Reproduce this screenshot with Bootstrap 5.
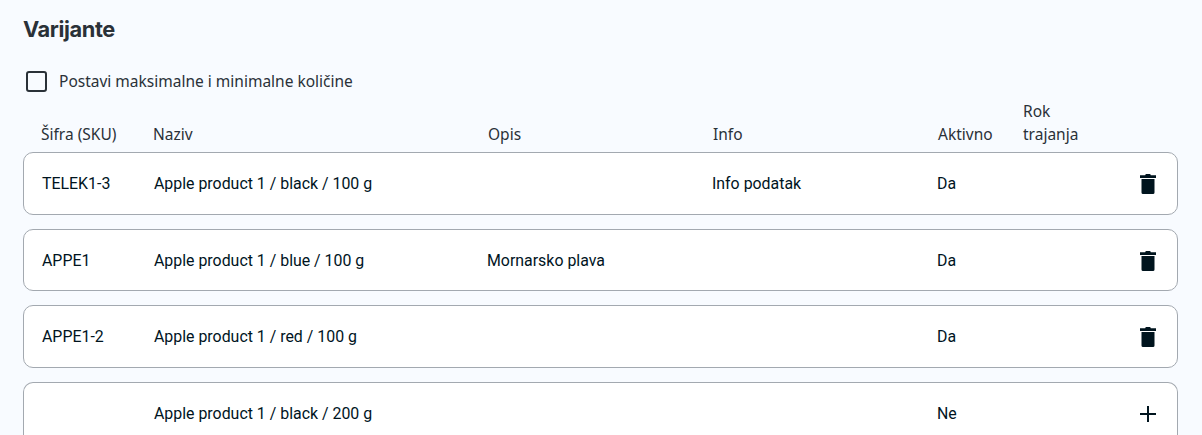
<!doctype html>
<html lang="hr"><head><meta charset="utf-8"><title>Varijante</title>
<link href="https://cdn.jsdelivr.net/npm/bootstrap@5.3.0/dist/css/bootstrap.min.css" rel="stylesheet">
<style>
html,body{height:435px;overflow:hidden}
body{background:#f8fbff;color:#00141e;font-family:Roboto,sans-serif;font-size:15.9px}
.sheet{height:435px;overflow:hidden;padding:15px 24px 0 23px}
.ttl{font:700 21.8px/28px Inter,sans-serif;color:#2a3138;margin:0 0 26px;letter-spacing:-.4px}
.chk{gap:12px;height:24px;margin-left:3px;font:400 15.5px/24px "Noto Sans",sans-serif;color:#2a3138}
.chk .form-check-input{width:21px;height:21px;margin:0;background-color:transparent;border:2px solid #2a3138;border-radius:3px;flex:none}
.heads{height:57px;margin-top:2px;align-items:flex-end;font:400 15.5px/23px "Noto Sans",sans-serif;color:#2a3138;padding-bottom:6px}
.line{height:62.5px;margin-bottom:14px;padding-top:1.5px;border:1px solid #a3a9b0;border-radius:10px;background:#fff;align-items:center;line-height:20px}
.line:last-child{height:53px;margin-bottom:0;border-bottom:0;border-radius:10px 10px 0 0;padding-top:0;align-items:flex-start}
.line:last-child>*{margin-top:21px}
.line:last-child>.act{margin-top:19px}
.c1{width:130px;flex:none;padding-left:18px}
.c2{width:333px;flex:none}
.c3,.c4{width:225px;flex:none}
.c5{width:85px;flex:none}
.c6{width:70px;flex:none}
.heads .c2{width:335px}
.act{margin-left:auto;margin-right:17px;display:flex;padding:0;border:0;background:none;color:#00141e}
</style></head><body>
<div class="sheet">
<h2 class="ttl">Varijante</h2>
<label class="chk d-flex align-items-center"><input class="form-check-input" type="checkbox"><span>Postavi maksimalne i minimalne količine</span></label>
<div class="heads d-flex"><div class="c1">Šifra (SKU)</div><div class="c2">Naziv</div><div class="c3">Opis</div><div class="c4">Info</div><div class="c5">Aktivno</div><div class="c6">Rok trajanja</div></div>
<div class="line d-flex"><div class="c1">TELEK1-3</div><div class="c2">Apple product 1 / black / 100 g</div><div class="c3"></div><div class="c4">Info podatak</div><div class="c5">Da</div><button class="act" type="button" aria-label="Obriši"><svg width="24" height="24" viewBox="0 0 24 24" fill="currentColor"><path d="M5.500 7h13v13.500a1.500 1.500 0 0 1-1.500 1.500H7a1.500 1.500 0 0 1-1.500-1.500zM4 3.300h5.200L9.800 2h4.400l.6 1.300H20V6H4z"/></svg></button></div>
<div class="line d-flex"><div class="c1">APPE1</div><div class="c2">Apple product 1 / blue / 100 g</div><div class="c3">Mornarsko plava</div><div class="c4"></div><div class="c5">Da</div><button class="act" type="button" aria-label="Obriši"><svg width="24" height="24" viewBox="0 0 24 24" fill="currentColor"><path d="M5.500 7h13v13.500a1.500 1.500 0 0 1-1.500 1.500H7a1.500 1.500 0 0 1-1.500-1.500zM4 3.300h5.200L9.800 2h4.400l.6 1.300H20V6H4z"/></svg></button></div>
<div class="line d-flex"><div class="c1">APPE1-2</div><div class="c2">Apple product 1 / red / 100 g</div><div class="c3"></div><div class="c4"></div><div class="c5">Da</div><button class="act" type="button" aria-label="Obriši"><svg width="24" height="24" viewBox="0 0 24 24" fill="currentColor"><path d="M5.500 7h13v13.500a1.500 1.500 0 0 1-1.500 1.500H7a1.500 1.500 0 0 1-1.500-1.500zM4 3.300h5.200L9.800 2h4.400l.6 1.300H20V6H4z"/></svg></button></div>
<div class="line d-flex"><div class="c1"></div><div class="c2">Apple product 1 / black / 200 g</div><div class="c3"></div><div class="c4"></div><div class="c5">Ne</div><button class="act" type="button" aria-label="Dodaj"><svg width="24" height="24" viewBox="0 0 24 24" fill="none" stroke="currentColor" stroke-width="2"><path d="M12 4v16M4 12h16"/></svg></button></div>
</div>
<script src="https://cdn.jsdelivr.net/npm/bootstrap@5.3.0/dist/js/bootstrap.bundle.min.js"></script>
</body></html>
